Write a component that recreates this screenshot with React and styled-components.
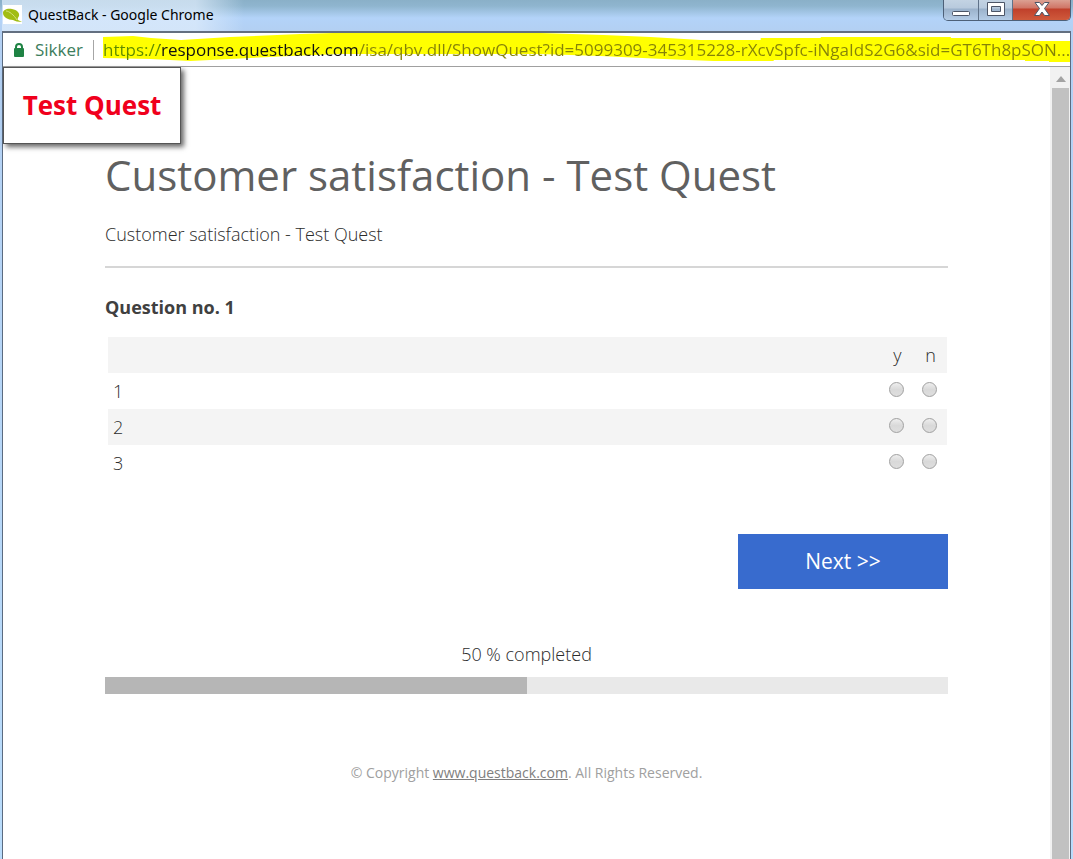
import { useState } from "react";
import styled, { createGlobalStyle } from "styled-components";

const GlobalStyle = createGlobalStyle`
  * {
    box-sizing: border-box;
  }

  body {
    margin: 0;
    font-family: "Open Sans", "Noto Sans", sans-serif;
    color: #2c2c2c;
  }
`;

const Window = styled.div`
  display: flex;
  flex-direction: column;
  min-height: 100vh;
  padding: 0 2px;
  background: linear-gradient(#8ab0c8 0, #8fb5cf 6px, #b3d3f9 18px, #b3d0f3 30px, #b9dcfb 100%);
`;

const TitleBar = styled.header`
  display: flex;
  justify-content: space-between;
  height: 31px;
`;

const WindowTitle = styled.div`
  display: flex;
  align-items: center;
  gap: 6px;
  padding: 0 30px 2px 1px;
  background: linear-gradient(90deg, rgba(225, 238, 252, 0.7) 80%, transparent);
  font-family: "Noto Sans", sans-serif;
  font-size: 14px;
  color: #000;

  svg {
    flex: none;
  }
`;

const WindowButtons = styled.div`
  display: flex;
  height: 21px;
  border: 1px solid #4d6078;
  border-top: 0;
  border-radius: 0 0 5px 5px;
  overflow: hidden;
`;

const WindowButton = styled.button`
  display: flex;
  align-items: center;
  justify-content: center;
  width: ${(props) => (props.$danger ? 58 : 34)}px;
  padding: 0 0 2px;
  border: 0;
  border-left: ${(props) => (props.$first ? "0" : "1px solid #5f7289")};
  background: ${(props) =>
    props.$danger
      ? "linear-gradient(#dba092 0, #cf7566 40%, #c0402b 45%, #cf5a3c 100%)"
      : "linear-gradient(#c3d3e3 0, #b8cadd 40%, #9bb2cb 45%, #b4cce6 100%)"};
`;

const Frame = styled.div`
  flex: 1;
  display: flex;
  flex-direction: column;
  border: 1px solid #5b6b80;
  border-top: 2px solid #636f80;
  border-bottom: 0;
  background: #fff;
`;

const AddressBar = styled.div`
  display: flex;
  align-items: center;
  height: 34px;
  padding-left: 10px;
  border-bottom: 1px solid #a0a0a0;
`;

const Secure = styled.div`
  display: flex;
  align-items: center;
  gap: 10px;
  padding-right: 10px;
  border-right: 1px solid #a6a6a6;
  font-size: 17px;
  line-height: 20px;
  color: #3c7d5c;
`;

const UrlField = styled.div`
  position: relative;
  flex: 1;
  height: 33px;
  margin-left: 9px;
`;

const Marker = styled.svg`
  position: absolute;
  inset: 0;
  width: 100%;
  height: 100%;
`;

// the host name is darker than the scheme and the path
const UrlInput = styled.input`
  position: relative;
  width: 100%;
  height: 33px;
  padding: 0;
  border: 0;
  outline: 0;
  font-family: "Open Sans", sans-serif;
  font-size: 17px;
  color: transparent;
  background: linear-gradient(90deg, #5d8a00 57px, #111 57px, #111 255px, #858208 255px);
  background-clip: text;
`;

const Viewport = styled.div`
  flex: 1;
  display: flex;
`;

const Page = styled.main`
  flex: 1;
`;

const Logo = styled.div`
  width: 178px;
  padding: 17px 0 18px;
  border: 1px solid #555;
  box-shadow: 3px 3px 5px rgba(0, 0, 0, 0.6);
  font-size: 26px;
  line-height: 40px;
  font-weight: 700;
  text-align: center;
  color: #f0001c;
`;

const Survey = styled.form`
  padding: 0 102px;
`;

const Heading = styled.h1`
  margin: 0;
  font-size: 42px;
  line-height: 62px;
  font-weight: 400;
  color: #606060;
`;

const Intro = styled.p`
  margin: 0;
  padding: 16px 0 20px;
  border-bottom: 2px solid #d6d6d6;
  font-size: 18px;
  line-height: 24px;
  font-weight: 300;
`;

const Question = styled.h2`
  margin: 27px 0 18px;
  font-size: 18px;
  line-height: 24px;
  font-weight: 700;
  color: #404040;
`;

const Matrix = styled.table`
  width: 100%;
  padding: 0 1px 0 3px;
  border-spacing: 0;
  font-size: 18px;
  line-height: 24px;

  tr:nth-child(odd) {
    background: ${(props) => props.$stripe};
  }

  th,
  td {
    height: 36px;
    padding: 0 5px;
    font-weight: 300;
    text-align: left;
  }
`;

const Choice = styled.td`
  width: 33px;

  && {
    padding: 0;
    text-align: center;
  }
`;

const Radio = styled.input`
  appearance: none;
  display: block;
  width: 15px;
  height: 15px;
  margin: 0 0 3px 8px;
  border: 1px solid #a0a0a0;
  border-radius: 50%;
  background: linear-gradient(#eee, #d9d9d9 50%, #dedede);

  &:checked {
    background: radial-gradient(#555 3px, #dedede 4px);
  }
`;

const Actions = styled.div`
  display: flex;
  justify-content: flex-end;
  margin-top: 53px;
`;

const NextButton = styled.button`
  width: 210px;
  height: 55px;
  padding: 0 0 2px;
  border: 0;
  background: #386bce;
  font-family: inherit;
  font-size: 21px;
  color: #fff;
`;

const Progress = styled.div`
  margin-top: 53px;
  text-align: center;
  font-size: 18px;
  line-height: 24px;
  font-weight: 300;
`;

const Track = styled.div`
  height: 17px;
  margin-top: 11px;
  background: #e9e9e9;
`;

const Fill = styled.div`
  height: 100%;
  background: #b6b6b6;
`;

const Footer = styled.footer`
  padding: 68px 0 24px;
  text-align: center;
  font-size: 14px;
  line-height: 22px;
  color: #a0a0a0;

  a {
    color: #808080;
  }
`;

const Scrollbar = styled.div`
  display: flex;
  flex-direction: column;
  width: 20px;
  padding: 0 1px 0 2px;
  background: #f1f1f1;
`;

const ScrollArrow = styled.button`
  display: flex;
  align-items: center;
  justify-content: center;
  height: 21px;
  padding: 2px 0 0;
  border: 0;
  background: none;
`;

const Thumb = styled.div`
  flex: 1;
  background: #c1c1c1;
`;

const rows = [1, 2, 3];
const answers = ["y", "n"];

function App() {
  const [url, setUrl] = useState(
    "https://response.questback.com/isa/qbv.dll/ShowQuest?id=5099309-345315228-rXcvSpfc-iNgaIdS2G6&sid=GT6Th8pSON..."
  );
  const completed = 50;

  return (
    <>
      <GlobalStyle />
      <Window>
        <TitleBar>
          <WindowTitle>
            <svg width="19" height="19" viewBox="0 0 19 19">
              <rect width="19" height="19" fill="#fff" />
              <path
                d="M0 8C0 5 4 3 9 4c5 1 8 4 7 7-1 2-2 3-1 4l4 2c-4 0-7-1-9-2C5 15 0 12 0 8Z"
                fill="#a2bd14"
              />
              <path d="M3 6c3 0 8 4 11 9" fill="none" stroke="#d2e07c" />
            </svg>
            QuestBack - Google Chrome
          </WindowTitle>
          <WindowButtons>
            <WindowButton type="button" aria-label="Minimize" $first>
              <svg width="18" height="18" viewBox="0 0 18 18">
                <rect x="0.5" y="11.5" width="17" height="4" rx="1" fill="#fff" stroke="#4c5566" />
              </svg>
            </WindowButton>
            <WindowButton type="button" aria-label="Maximize">
              <svg width="18" height="18" viewBox="0 0 18 18">
                <path
                  d="M.5 2.5h17v13H.5ZM4.500 6.500v5h9v-5Z"
                  fill="#fff"
                  stroke="#4c5566"
                  fillRule="evenodd"
                />
              </svg>
            </WindowButton>
            <WindowButton type="button" aria-label="Close" $danger>
              <svg width="18" height="18" viewBox="0 0 18 18">
                <path
                  d="M2 2.500h4.500L9 5.500l2.500-3H16l-4.500 6 5 7h-5L9 12l-2.500 3.500h-5l5-7Z"
                  fill="#fff"
                  stroke="#4c5566"
                />
              </svg>
            </WindowButton>
          </WindowButtons>
        </TitleBar>
        <Frame>
          <AddressBar>
            <Secure>
              <svg width="12" height="14" viewBox="0 0 12 14">
                <rect x="1" y="5" width="10" height="9" rx="1" fill="#1f8344" />
                <path d="M3 6V4a3 3 0 0 1 6 0v2" fill="none" stroke="#1f8344" strokeWidth="2" />
              </svg>
              Sikker
            </Secure>
            <UrlField>
              <Marker viewBox="0 0 966 33" preserveAspectRatio="none">
                <path
                  d="M0 4 30 3 48 5 78 7 127 4 197 1 230 0H437L500 2 547 4 597 7H657V5H717V4H847V5H897V7H931V8H966V29H945V28H921V27H670V28H610L560 26 497 23 437 21H237L187 23 147 25 87 28 67 27 47 26 0 25Z"
                  fill="#ff0"
                />
              </Marker>
              <UrlInput
                aria-label="Address"
                value={url}
                onChange={(e) => setUrl(e.target.value)}
              />
            </UrlField>
          </AddressBar>
          <Viewport>
            <Page>
              <Logo>Test Quest</Logo>
              <Survey onSubmit={(e) => e.preventDefault()}>
                <Heading>Customer satisfaction - Test Quest</Heading>
                <Intro>Customer satisfaction - Test Quest</Intro>
                <Question>Question no. 1</Question>
                <Matrix $stripe="#f4f4f4">
                  <tbody>
                    <tr>
                      <td />
                      {answers.map((answer) => (
                        <Choice as="th" scope="col" key={answer}>
                          {answer}
                        </Choice>
                      ))}
                    </tr>
                    {rows.map((row) => (
                      <tr key={row}>
                        <th scope="row">{row}</th>
                        {answers.map((answer) => (
                          <Choice key={answer}>
                            <Radio
                              type="radio"
                              name={`question-${row}`}
                              value={answer}
                              aria-label={`${row} ${answer}`}
                            />
                          </Choice>
                        ))}
                      </tr>
                    ))}
                  </tbody>
                </Matrix>
                <Actions>
                  <NextButton type="submit">Next &gt;&gt;</NextButton>
                </Actions>
                <Progress>
                  {completed} % completed
                  <Track>
                    <Fill style={{ width: `${completed}%` }} />
                  </Track>
                </Progress>
                <Footer>
                  © Copyright <a href="#questback">www.questback.com</a>. All Rights Reserved.
                </Footer>
              </Survey>
            </Page>
            <Scrollbar>
              <ScrollArrow type="button" aria-label="Scroll up">
                <svg width="10" height="6" viewBox="0 0 10 6">
                  <path d="M0 6 5 0l5 6Z" fill="#a3a3a3" />
                </svg>
              </ScrollArrow>
              <Thumb />
            </Scrollbar>
          </Viewport>
        </Frame>
      </Window>
    </>
  );
}

export default App;
